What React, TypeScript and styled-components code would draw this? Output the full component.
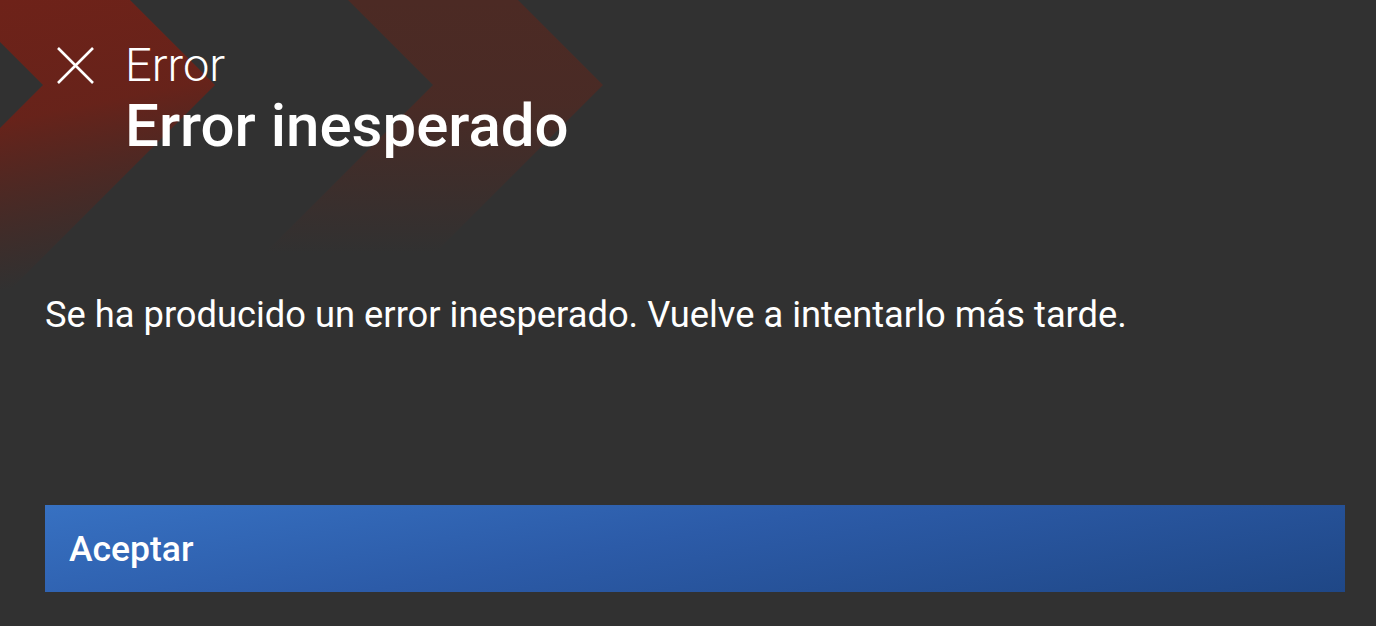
import styled, { createGlobalStyle } from "styled-components";

const GlobalStyle = createGlobalStyle`
  html, body {
    margin: 0;
    padding: 0;
    background: #313131;
  }
  body {
    font-family: Roboto, "Noto Sans", "Liberation Sans", sans-serif;
    color: #ffffff;
  }
`;

const Screen = styled.div`
  position: relative;
  width: 1376px;
  height: 626px;
  overflow: hidden;
  background: #313131;
  display: flex;
  flex-direction: column;
  padding: 0 31px 0 45px;
  box-sizing: border-box;
`;

const Backdrop = styled.svg`
  position: absolute;
  left: 0;
  top: 0;
  pointer-events: none;
`;

const Header = styled.header`
  position: relative;
  display: flex;
  align-items: flex-start;
  padding-top: 36px;
`;

const CloseButton = styled.button`
  width: 80px;
  height: 58px;
  padding: 0 0 0 12px;
  margin: 0;
  border: none;
  background: transparent;
  display: flex;
  align-items: center;
  cursor: pointer;
`;

const Titles = styled.div`
  display: flex;
  flex-direction: column;
`;

const Kicker = styled.div`
  font-size: 47px;
  font-weight: 300;
  line-height: 58px;
`;

const Title = styled.h1`
  margin: 0;
  font-size: 60px;
  font-weight: 500;
  line-height: 64px;
`;

const Message = styled.p`
  position: relative;
  margin: 135px 0 0;
  font-size: 36.3px;
  font-weight: 400;
  line-height: 44px;
`;

const Footer = styled.div`
  position: relative;
  margin-top: auto;
  padding-bottom: 34px;
`;

const PrimaryButton = styled.button`
  width: 100%;
  height: 87px;
  border: none;
  padding: 0 24px;
  text-align: left;
  font-family: inherit;
  font-size: 35.5px;
  font-weight: 500;
  color: #ffffff;
  background: linear-gradient(170deg, #3771c2 0%, #2c5ba8 45%, #1f4786 100%);
  cursor: pointer;
`;

const CloseIcon = () => (
  <svg width="37" height="37" viewBox="0 0 37 37">
    <path d="M1 1 L36 36 M36 1 L1 36" stroke="#ffffff" strokeWidth="2.6" fill="none" />
  </svg>
);

const Chevrons = () => (
  <Backdrop width="700" height="320" viewBox="0 0 700 320">
    <defs>
      <linearGradient id="redFade" x1="0" y1="0" x2="0.15" y2="1">
        <stop offset="0" stopColor="#6e2219" stopOpacity="1" />
        <stop offset="0.4" stopColor="#6a2219" stopOpacity="0.95" />
        <stop offset="0.95" stopColor="#5a2219" stopOpacity="0" />
      </linearGradient>
      <linearGradient id="brownFade" x1="0" y1="0" x2="0" y2="1">
        <stop offset="0" stopColor="#4c2a24" stopOpacity="1" />
        <stop offset="0.35" stopColor="#4c2a24" stopOpacity="0.9" />
        <stop offset="0.85" stopColor="#4c2a24" stopOpacity="0" />
      </linearGradient>
    </defs>
    <polygon points="348,0 518,0 603,85 390,298 220,298 433,85" fill="url(#brownFade)" />
    <polygon points="0,0 130,0 215,85 0,300 0,128 43,85 0,42" fill="url(#redFade)" />
  </Backdrop>
);

export default function App() {
  return (
    <>
      <GlobalStyle />
      <Screen>
        <Chevrons />
        <Header>
          <CloseButton aria-label="Cerrar">
            <CloseIcon />
          </CloseButton>
          <Titles>
            <Kicker>Error</Kicker>
            <Title>Error inesperado</Title>
          </Titles>
        </Header>
        <Message>Se ha producido un error inesperado. Vuelve a intentarlo más tarde.</Message>
        <Footer>
          <PrimaryButton>Aceptar</PrimaryButton>
        </Footer>
      </Screen>
    </>
  );
}
